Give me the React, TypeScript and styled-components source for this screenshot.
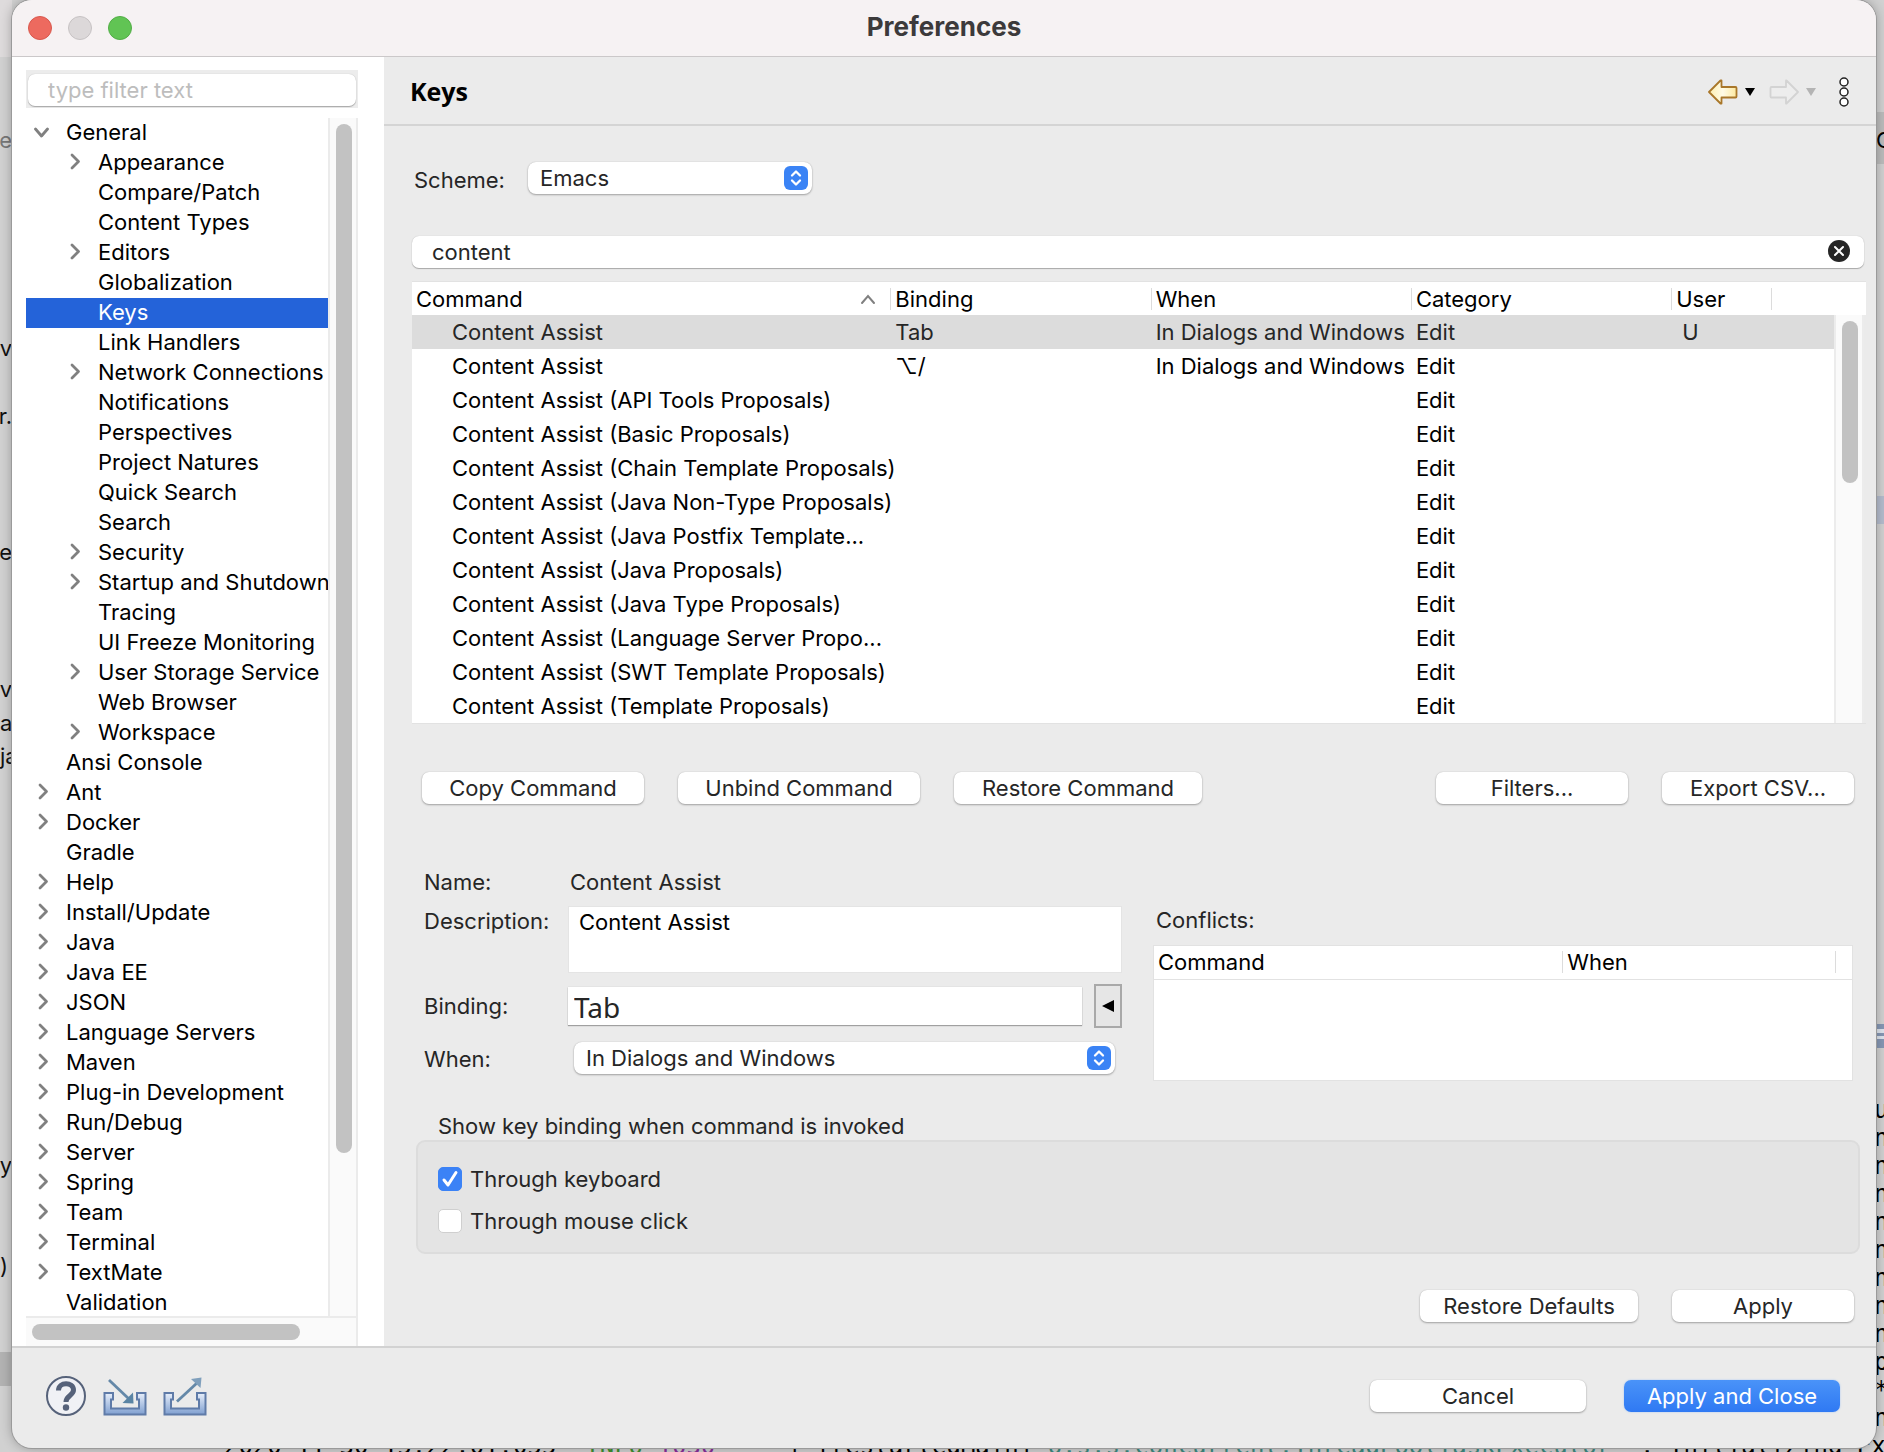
import React from "react";
import styled, { createGlobalStyle } from "styled-components";

const Global = createGlobalStyle`
  * { box-sizing: border-box; }
  html, body, #root { height: 100%; margin: 0; }
  body { overflow: hidden; background: #d3d3d3; }
  body, button, input, select, textarea, table {
    font-family: Inter, "Liberation Sans", "DejaVu Sans", sans-serif;
    font-size: 22px;
    line-height: 30px;
    color: #000;
  }
  button { cursor: default; }
`;

const Desktop = styled.div`
  position: relative;
  height: 100vh;
  padding: 0 8px 4px 12px;
  overflow: hidden;
  background: #d1d1d1;
`;

/* ---- editor window that lies behind the dialog ---- */

const Backdrop = styled.div`
  position: absolute;
  inset: 0;
`;

const Band = styled.div<{ $left: number; $width: number; $top: number; $height: number; $color: string }>`
  position: absolute;
  left: ${(p) => p.$left}px;
  width: ${(p) => p.$width}px;
  top: ${(p) => p.$top}px;
  height: ${(p) => p.$height}px;
  background: ${(p) => p.$color};
`;

const LeftFragment = styled.span<{ $top: number; $dim?: boolean; $start?: boolean }>`
  position: absolute;
  left: 0;
  top: ${(p) => p.$top}px;
  width: 12px;
  display: flex;
  justify-content: ${(p) => (p.$start ? "flex-start" : "flex-end")};
  white-space: nowrap;
  overflow: hidden;
  color: ${(p) => (p.$dim ? "#777" : "#111")};
`;

const RightFragment = styled.span<{ $top: number }>`
  position: absolute;
  right: 0;
  top: ${(p) => p.$top}px;
  width: 8px;
  overflow: hidden;
`;

const LogColumn = styled.div`
  position: absolute;
  right: 0;
  top: 1096px;
  width: 10px;
  overflow: hidden;
  font: 24px/28px "DejaVu Sans Mono", monospace;
`;

const LogLine = styled.pre`
  position: absolute;
  left: 224px;
  bottom: -8px;
  margin: 0;
  font: 24px/28px "DejaVu Sans Mono", monospace;
`;

const Ink = styled.span<{ $color: string }>`
  color: ${(p) => p.$color};
`;

/* ---- dialog ---- */

const Dialog = styled.main`
  position: relative;
  display: flex;
  flex-direction: column;
  height: 100%;
  background: #ebebeb;
  border-radius: 20px;
  overflow: hidden;
  box-shadow: 0 0 0 1px #9a9a9a, 0 0 12px rgba(0, 0, 0, 0.3);
`;

const TitleBar = styled.header`
  display: grid;
  grid-template-columns: 1fr auto 1fr;
  align-items: center;
  height: 57px;
  flex: none;
  padding: 0 16px;
  background: #f6f2f3;
  border-bottom: 1px solid #cbc8c9;
`;

const Lights = styled.div`
  display: flex;
  gap: 16px;
`;

const Light = styled.button<{ $color: string; $edge: string }>`
  width: 24px;
  height: 24px;
  padding: 0;
  border-radius: 50%;
  background: ${(p) => p.$color};
  border: 1px solid ${(p) => p.$edge};
`;

const WindowTitle = styled.h1`
  margin: 0;
  padding-bottom: 2px;
  font-size: 26px;
  line-height: 30px;
  font-weight: 700;
  color: #3c3a3b;
`;

const Body = styled.div`
  display: flex;
  flex: 1;
  min-height: 0;
`;

const Sidebar = styled.nav`
  display: flex;
  flex-direction: column;
  width: 372px;
  flex: none;
  padding: 13px 26px 0 14px;
  background: #fff;
`;

const FilterFrame = styled.div`
  padding: 4px 2px 2px;
  background: #ececec;
  margin-bottom: 10px;
`;

const TextField = styled.input`
  display: block;
  width: 100%;
  height: 32px;
  padding: 0 20px;
  border: 0;
  border-radius: 7px;
  background: #fff;
  color: #262626;
  box-shadow: 0 1px 1px #a8a8a8, 0 0 1px #b4b4b4;
  outline: none;
  &::placeholder { color: #bdbdbd; opacity: 1; }
`;

const TreePane = styled.div`
  display: grid;
  grid-template-columns: minmax(0, 1fr) 30px;
  grid-template-rows: minmax(0, 1fr) 30px;
  flex: 1;
  min-height: 0;
`;

const Tree = styled.ul`
  margin: 0;
  padding: 0;
  list-style: none;
  overflow: hidden;
`;

const TreeRow = styled.li<{ $depth: number; $selected?: boolean }>`
  display: flex;
  align-items: center;
  height: 30px;
  padding: 0 0 2px ${(p) => (p.$depth ? 40 : 8)}px;
  white-space: nowrap;
  background: ${(p) => (p.$selected ? "#2463d9" : "transparent")};
  color: ${(p) => (p.$selected ? "#fff" : "#000")};
`;

const Twisty = styled.span`
  display: flex;
  flex: none;
  width: 32px;
`;

const VTrack = styled.div`
  border-left: 2px solid #ebebeb;
  border-right: 2px solid #ebebeb;
  background: #fafafa;
  padding: 6px 5px 0 6px;
`;

const VThumb = styled.div<{ $size: string }>`
  width: 16px;
  height: ${(p) => p.$size};
  border-radius: 8px;
  background: #c2c2c2;
`;

const HTrack = styled.div`
  grid-column: 1 / -1;
  border-top: 2px solid #ebebeb;
  border-right: 2px solid #ebebeb;
  background: #fafafa;
  padding: 6px;
`;

const HThumb = styled.div`
  width: calc(100% - 50px);
  height: 16px;
  border-radius: 8px;
  background: #c2c2c2;
`;

const Page = styled.section`
  display: flex;
  flex-direction: column;
  flex: 1;
  min-width: 0;
`;

const PageHeader = styled.div`
  display: flex;
  align-items: center;
  justify-content: space-between;
  height: 69px;
  padding: 0 26px;
  border-bottom: 2px solid #d4d4d4;
`;

const PageTitle = styled.h2`
  margin: 0;
  font: 700 25px/30px "Open Sans", "Noto Sans", sans-serif;
`;

const ToolRow = styled.div`
  display: flex;
  align-items: center;
`;

const Tool = styled.button<{ $gap: number }>`
  display: flex;
  padding: 0;
  margin-left: ${(p) => p.$gap}px;
  border: 0;
  background: none;
`;

const Content = styled.div`
  display: flex;
  flex-direction: column;
  flex: 1;
  min-height: 0;
  padding: 36px 12px 24px 28px;
`;

const SchemeRow = styled.div`
  display: flex;
  align-items: center;
  height: 32px;
  gap: 24px;
  margin-bottom: 42px;
`;

const Label = styled.label`
  color: #262626;
`;

const SchemeLabel = styled(Label)`
  width: 92px;
  padding: 4px 0 0 2px;
`;

const PopupFrame = styled.div<{ $width?: number }>`
  position: relative;
  width: ${(p) => (p.$width ? p.$width + "px" : "auto")};
`;

const PopupSelect = styled.select`
  appearance: none;
  display: block;
  width: 100%;
  height: 32px;
  padding: 0 44px 0 12px;
  border: 0;
  border-radius: 8px;
  background: #fff;
  color: #262626;
  box-shadow: 0 1px 2px #a0a0a0, 0 0 1px #b4b4b4;
`;

const PopupArrows = styled.span`
  position: absolute;
  right: 4px;
  top: 4px;
  display: flex;
  pointer-events: none;
`;

const SearchFrame = styled.div`
  position: relative;
  margin-bottom: 13px;
`;

const ClearButton = styled.button`
  position: absolute;
  right: 14px;
  top: 4px;
  display: flex;
  padding: 0;
  border: 0;
  background: none;
`;

const TableFrame = styled.div`
  position: relative;
  background: #fff;
  margin: 0 -2px 48px 0;
  border-top: 1px solid #e2e2e2;
  border-bottom: 1px solid #e2e2e2;
`;

const DataTable = styled.table`
  width: 100%;
  border-collapse: collapse;
  table-layout: fixed;
`;

const HeadCell = styled.th<{ $first?: boolean }>`
  height: 33px;
  padding: 0 0 0 ${(p) => (p.$first ? 4 : 5)}px;
  font-weight: 400;
  text-align: left;
  background: ${(p) =>
    p.$first ? "none" : "linear-gradient(#dcdcdc, #dcdcdc) 0 50% / 1px 22px no-repeat"};
`;

const HeadLabel = styled.span`
  display: flex;
  align-items: center;
  justify-content: space-between;
  padding-right: 14px;
`;

const DataRow = styled.tr<{ $selected?: boolean }>`
  background: ${(p) => (p.$selected ? "#dcdcdc" : "#fff")};
  color: ${(p) => (p.$selected ? "#262626" : "#000")};
`;

const Cell = styled.td<{ $indent?: number }>`
  height: 34px;
  padding: 0 0 0 ${(p) => p.$indent ?? 5}px;
  white-space: nowrap;
`;

const TableScroll = styled.div`
  position: absolute;
  top: 33px;
  right: 2px;
  bottom: 0;
  width: 30px;
  border-left: 2px solid #ececec;
  border-right: 2px solid #ececec;
  background: #fafafa;
  box-shadow: 2px 0 0 #ebebeb;
  padding: 6px 6px;
`;

const ButtonRow = styled.div<{ $bottom?: boolean }>`
  display: flex;
  gap: 34px;
  padding: 0 10px;
  justify-content: ${(p) => (p.$bottom ? "flex-end" : "flex-start")};
  margin-top: ${(p) => (p.$bottom ? "auto" : "0")};
`;

const PushButton = styled.button<{ $width: number; $primary?: boolean }>`
  width: ${(p) => p.$width}px;
  height: 32px;
  padding: 0;
  border: 0;
  border-radius: 7px;
  white-space: nowrap;
  color: ${(p) => (p.$primary ? "#fff" : "#262626")};
  background: ${(p) => (p.$primary ? "linear-gradient(#4a93f8, #2f79f3)" : "#fff")};
  box-shadow: ${(p) =>
    p.$primary ? "0 0 2px #9fc3f5" : "0 1px 2px #a0a0a0, 0 0 1px #b4b4b4"};
`;

/* pushes the filter and export buttons to the far edge */
const Spacer = styled.div`
  flex: 1;
`;

const Details = styled.div`
  display: grid;
  grid-template-columns: 554fr 700fr;
  gap: 31px;
  padding: 63px 11px 0 156px;
`;

const DetailForm = styled.div`
  display: grid;
  grid-template-columns: 144px minmax(0, 1fr);
  align-content: start;
  margin-left: -144px;
`;

const FormLabel = styled(Label)`
  display: block;
`;

const NameValue = styled.output`
  padding-left: 2px;
  height: 39px;
  color: #262626;
`;

const Description = styled.textarea`
  display: block;
  height: 67px;
  padding: 0 10px;
  border: 1px solid #e4e4e4;
  background: #fff;
  resize: none;
  outline: none;
`;

const BindingRow = styled.div`
  display: flex;
  gap: 12px;
  margin-top: 11px;
`;

const BindingInput = styled.input`
  flex: 1;
  min-width: 0;
  height: 38px;
  margin-top: 3px;
  padding: 2px 6px 0;
  border: 0;
  background: #fff;
  box-shadow: 0 1px 1px #a0a0a0, 0 0 1px #c0c0c0;
  font: 28px/34px "Noto Sans", "Open Sans", sans-serif;
  color: #262626;
`;

const ArrowButton = styled.button`
  display: flex;
  align-items: center;
  justify-content: center;
  width: 28px;
  height: 44px;
  padding: 0;
  border: 2px solid #a9a9a9;
  background: #e6e6e6;
`;

const LowLabel = styled(FormLabel)<{ $lift: number }>`
  align-self: end;
  padding-bottom: ${(p) => p.$lift}px;
`;

const WhenFrame = styled(PopupFrame)`
  margin: 14px 7px 0 6px;
`;

const Conflicts = styled.div`
  padding-top: 38px;
`;

const ConflictsTitle = styled.div`
  padding-left: 3px;
  color: #262626;
  margin-bottom: 10px;
`;

const ConflictsFrame = styled.div`
  height: 136px;
  background: #fff;
  border: 1px solid #e2e2e2;
`;

const ConflictsHead = styled.thead`
  border-bottom: 1px solid #e2e2e2;
`;

const KeyGroup = styled.fieldset`
  margin: 32px 4px 0 4px;
  padding: 0;
  border: 0;
  min-width: 0;
`;

const KeyLegend = styled.legend`
  padding: 0 0 0 22px;
  line-height: 27px;
  color: #262626;
`;

const KeyBox = styled.div`
  display: grid;
  gap: 12px;
  align-content: start;
  height: 114px;
  padding: 22px 20px;
  border: 2px solid #dcdcdc;
  border-radius: 9px;
  background: #e4e4e4;
`;

const CheckLabel = styled(Label)`
  display: flex;
  align-items: center;
  gap: 8px;
`;

const Check = styled.input`
  appearance: none;
  width: 24px;
  height: 24px;
  margin: 0;
  border-radius: 5px;
  background: #fff;
  border: 1px solid #cfcfcf;
  &:checked {
    border-color: #3b82f6;
    background: #3b82f6
      url("data:image/svg+xml,%3Csvg xmlns='http://www.w3.org/2000/svg' viewBox='0 0 22 22'%3E%3Cpath d='M5 12l4 5L17 4.500' fill='none' stroke='white' stroke-width='3' stroke-linecap='round' stroke-linejoin='round'/%3E%3C/svg%3E");
  }
`;

const Footer = styled.footer`
  display: flex;
  align-items: center;
  flex: none;
  height: 102px;
  padding: 0 36px 4px 33px;
  border-top: 2px solid #d2d2d2;
`;

const FooterButtons = styled.div`
  display: flex;
  gap: 38px;
  margin-left: auto;
`;

/* ---- drawings ---- */

const Chevron = ({ open }: { open?: boolean }) => (
  <svg width="20" height="20" viewBox="0 0 20 20" fill="none" stroke="#808080" strokeWidth="2.8" strokeLinecap="round" strokeLinejoin="round">
    {open ? <path d="M1.500 7 7.500 14 13.500 7" /> : <path d="M6 3 12.500 9.500 6 16" />}
  </svg>
);

const UpDown = () => (
  <svg width="24" height="24" viewBox="0 0 24 24">
    <rect width="24" height="24" rx="6" fill="#3a83f5" />
    <path d="M8 9.500 12 5.500 16 9.500M8 14.500 12 18.500 16 14.500" fill="none" stroke="#fff" strokeWidth="2.300" strokeLinecap="round" strokeLinejoin="round" />
  </svg>
);

const ArrowIcon = ({ forward }: { forward?: boolean }) => (
  <svg width="30" height="30" viewBox="0 0 30 30">
    <defs>
      <linearGradient id="gold" x1="0" y1="0" x2="1" y2="0">
        <stop offset="0" stopColor="#fdeeb0" />
        <stop offset="0.500" stopColor="#fffbe6" />
        <stop offset="1" stopColor="#fde9a0" />
      </linearGradient>
    </defs>
    <path
      d={forward ? "M29 16 17.500 4.500H17V11H2.500Q1.500 11 1.500 12V20.500Q1.500 21.500 2.500 21.500H17V27.500H17.500Z" : "M1 16 12.500 4.500H13.500V11H27.500Q28.500 11 28.500 12V20.500Q28.500 21.500 27.500 21.500H13.500V27.500H12.500Z"}
      fill={forward ? "#ededed" : "url(#gold)"}
      stroke={forward ? "#d3d3d3" : "#a9772a"}
      strokeWidth="1.800"
      strokeLinejoin="round"
    />
  </svg>
);

const Caret = ({ color }: { color: string }) => (
  <svg width="10" height="10" viewBox="0 0 10 10">
    <path d="M0 2H10L5 10Z" fill={color} />
  </svg>
);

const Dots = () => (
  <svg width="12" height="32" viewBox="0 0 12 32" fill="#fff" stroke="#222" strokeWidth="1.500">
    <circle cx="6" cy="7" r="4" />
    <circle cx="6" cy="17" r="4" />
    <circle cx="6" cy="27" r="4" />
  </svg>
);

const HelpIcon = () => (
  <svg width="42" height="42" viewBox="0 0 42 42" fill="none" stroke="#56627a">
    <circle cx="21" cy="21" r="19" strokeWidth="2" fill="#f0f1f5" />
    <path d="M13.500 15.500C13.500 6.500 28.500 6.500 28.500 15 28.500 20.500 21 20.500 21 27" strokeWidth="5" />
    <circle cx="21" cy="32.500" r="3.200" fill="#56627a" stroke="none" />
  </svg>
);

const TrayIcon = ({ out }: { out?: boolean }) => (
  <svg width="44" height="42" viewBox="0 0 44 42">
    <defs>
      <linearGradient id="tray" x1="0" y1="0" x2="0" y2="1">
        <stop offset="0" stopColor="#e8effa" />
        <stop offset="1" stopColor="#7f9fd0" />
      </linearGradient>
    </defs>
    <path d="M1.500 18H10V24.500H8V33.500H36V24.500H34V18H42.500V39.500H1.500Z" fill="url(#tray)" stroke="#5f7ba8" strokeWidth="2" />
    {out ? (
      <>
        <path d="M14 26.500 34 8" stroke="#6488a8" strokeWidth="2.800" />
        <path d="M28 4 38.500 2.500 37.500 13Z" fill="#7f9fbc" />
      </>
    ) : (
      <>
        <path d="M6 5 26 24" stroke="#6488a8" strokeWidth="2.800" />
        <path d="M30 17.500 30.500 28.500 19.500 28Z" fill="#5a84a4" />
      </>
    )}
  </svg>
);

/* ---- data ---- */

type Node = { name: string; depth: number; kind: "open" | "closed" | "leaf" };

const branch = (depth: number, text: string): Node[] =>
  text.split("|").map((item) => ({
    name: item.replace("+", ""),
    depth,
    kind: item.startsWith("+") ? "closed" : "leaf",
  }));

const nodes: Node[] = [
  { name: "General", depth: 0, kind: "open" },
  ...branch(
    1,
    "+Appearance|Compare/Patch|Content Types|+Editors|Globalization|Keys|Link Handlers|+Network Connections|Notifications|Perspectives|Project Natures|Quick Search|Search|+Security|+Startup and Shutdown|Tracing|UI Freeze Monitoring|+User Storage Service|Web Browser|+Workspace"
  ),
  ...branch(
    0,
    "Ansi Console|+Ant|+Docker|Gradle|+Help|+Install/Update|+Java|+Java EE|+JSON|+Language Servers|+Maven|+Plug-in Development|+Run/Debug|+Server|+Spring|+Team|+Terminal|+TextMate|Validation"
  ),
];

const commands = [
  ["Content Assist", "Tab", "In Dialogs and Windows", "U"],
  ["Content Assist", "⌥/", "In Dialogs and Windows", ""],
  ["Content Assist (API Tools Proposals)", "", "", ""],
  ["Content Assist (Basic Proposals)", "", "", ""],
  ["Content Assist (Chain Template Proposals)", "", "", ""],
  ["Content Assist (Java Non-Type Proposals)", "", "", ""],
  ["Content Assist (Java Postfix Template...", "", "", ""],
  ["Content Assist (Java Proposals)", "", "", ""],
  ["Content Assist (Java Type Proposals)", "", "", ""],
  ["Content Assist (Language Server Propo...", "", "", ""],
  ["Content Assist (SWT Template Proposals)", "", "", ""],
  ["Content Assist (Template Proposals)", "", "", ""],
];

const leftFragments: [number, string][] = [
  [333, "av"], [401, "r."], [537, "e"], [674, "v"], [1150, "ay"],
];

const leadingFragments: [number, string][] = [
  [708, "a"], [741, "ja"], [1251, ")"],
];

export default function App() {
  return (
    <>
      <Global />
      <Desktop>
        <Backdrop aria-hidden="true">
          <Band $left={0} $width={12} $top={0} $height={57} $color="#dedbdc" />
          <Band $left={0} $width={12} $top={1352} $height={34} $color="#b3b3b3" />
          <LeftFragment $top={125} $dim>e</LeftFragment>
          {leftFragments.map(([top, text]) => (
            <LeftFragment key={top} $top={top}>{text}</LeftFragment>
          ))}
          {leadingFragments.map(([top, text]) => (
            <LeftFragment key={top} $top={top} $start>{text}</LeftFragment>
          ))}
          <Band $left={1876} $width={8} $top={112} $height={52} $color="#bcbcbc" />
          <Band $left={1876} $width={8} $top={496} $height={28} $color="#b4bccd" />
          <Band $left={1876} $width={8} $top={1024} $height={24} $color="#8798b5" />
          <Band $left={1876} $width={8} $top={1029} $height={4} $color="#dfe5ee" />
          <Band $left={1876} $width={8} $top={1036} $height={3} $color="#dfe5ee" />
          <RightFragment $top={125}>C</RightFragment>
          <LogColumn>
            {"unnnnnnnnp*n".split("").map((c, i) => (
              <div key={i}>{c}</div>
            ))}
          </LogColumn>
          <LogLine>
            {"2020-11-30 15:22:01.055  "}
            <Ink $color="#3f8f2f">INFO</Ink>
            <Ink $color="#8a2f9a"> 1030</Ink>
            {"     | [restartedMain] "}
            <Ink $color="#3f8a80">o.s.s.concurrent.ThreadPoolTaskExecutor</Ink>
            {"  : Initializing Ex"}
          </LogLine>
        </Backdrop>

        <Dialog>
          <TitleBar>
            <Lights>
              <Light aria-label="Close" $color="#ed6a5f" $edge="#d8584d" />
              <Light aria-label="Minimize" $color="#dcd8d9" $edge="#c6c2c3" />
              <Light aria-label="Zoom" $color="#61c454" $edge="#52ad46" />
            </Lights>
            <WindowTitle>Preferences</WindowTitle>
          </TitleBar>

          <Body>
            <Sidebar>
              <FilterFrame>
                <TextField aria-label="Filter" placeholder="type filter text" />
              </FilterFrame>
              <TreePane>
                <Tree>
                  {nodes.map((n) => (
                    <TreeRow key={n.name} $depth={n.depth} $selected={n.name === "Keys"}>
                      <Twisty>{n.kind !== "leaf" && <Chevron open={n.kind === "open"} />}</Twisty>
                      {n.name}
                    </TreeRow>
                  ))}
                </Tree>
                <VTrack><VThumb $size="calc(100% - 163px)" /></VTrack>
                <HTrack><HThumb /></HTrack>
              </TreePane>
            </Sidebar>

            <Page>
              <PageHeader>
                <PageTitle>Keys</PageTitle>
                <ToolRow>
                  <Tool $gap={0} aria-label="Back"><ArrowIcon /></Tool>
                  <Tool $gap={7} aria-label="Back history"><Caret color="#000" /></Tool>
                  <Tool $gap={14} aria-label="Forward"><ArrowIcon forward /></Tool>
                  <Tool $gap={7} aria-label="Forward history"><Caret color="#b4b4b4" /></Tool>
                  <Tool $gap={22} aria-label="View menu"><Dots /></Tool>
                </ToolRow>
              </PageHeader>

              <Content>
                <SchemeRow>
                  <SchemeLabel htmlFor="scheme">Scheme:</SchemeLabel>
                  <PopupFrame $width={284}>
                    <PopupSelect id="scheme"><option>Emacs</option></PopupSelect>
                    <PopupArrows><UpDown /></PopupArrows>
                  </PopupFrame>
                </SchemeRow>

                <SearchFrame>
                  <TextField aria-label="Search commands" defaultValue="content" />
                  <ClearButton aria-label="Clear">
                    <svg width="22" height="22" viewBox="0 0 22 22">
                      <circle cx="11" cy="11" r="11" fill="#262626" />
                      <path d="M7 7 15 15M15 7 7 15" stroke="#fff" strokeWidth="2" strokeLinecap="round" />
                    </svg>
                  </ClearButton>
                </SearchFrame>

                <TableFrame>
                  <DataTable>
                    <colgroup>
                      <col style={{ width: "32.900%" }} />
                      <col style={{ width: "17.900%" }} />
                      <col style={{ width: "17.900%" }} />
                      <col style={{ width: "17.900%" }} />
                      <col style={{ width: "6.900%" }} />
                      <col />
                    </colgroup>
                    <thead>
                      <tr>
                        <HeadCell $first>
                          <HeadLabel>
                            Command
                            <svg width="16" height="12" viewBox="0 0 16 12" fill="none" stroke="#808080" strokeWidth="2" strokeLinecap="round">
                              <path d="M2 10 8 3 14 10" />
                            </svg>
                          </HeadLabel>
                        </HeadCell>
                        <HeadCell>Binding</HeadCell>
                        <HeadCell>When</HeadCell>
                        <HeadCell>Category</HeadCell>
                        <HeadCell>User</HeadCell>
                        <HeadCell />
                      </tr>
                    </thead>
                    <tbody>
                      {commands.map(([name, binding, when, user], i) => (
                        <DataRow key={i} $selected={i === 0}>
                          <Cell $indent={40}>{name}</Cell>
                          <Cell>{binding}</Cell>
                          <Cell>{when}</Cell>
                          <Cell>Edit</Cell>
                          <Cell $indent={11}>{user}</Cell>
                          <Cell />
                        </DataRow>
                      ))}
                    </tbody>
                  </DataTable>
                  <TableScroll><VThumb $size="162px" /></TableScroll>
                </TableFrame>

                <ButtonRow>
                  <PushButton $width={222}>Copy Command</PushButton>
                  <PushButton $width={242}>Unbind Command</PushButton>
                  <PushButton $width={248}>Restore Command</PushButton>
                  <Spacer />
                  <PushButton $width={192}>Filters...</PushButton>
                  <PushButton $width={192}>Export CSV...</PushButton>
                </ButtonRow>

                <Details>
                  <DetailForm>
                    <FormLabel as="span">Name:</FormLabel>
                    <NameValue>Content Assist</NameValue>
                    <FormLabel htmlFor="description">Description:</FormLabel>
                    <Description id="description" defaultValue="Content Assist" />
                    <LowLabel $lift={7} htmlFor="binding">Binding:</LowLabel>
                    <BindingRow>
                      <BindingInput id="binding" defaultValue="Tab" />
                      <ArrowButton aria-label="Insert special key">
                        <svg width="12" height="12" viewBox="0 0 12 12"><path d="M0 6 12 0V12Z" /></svg>
                      </ArrowButton>
                    </BindingRow>
                    <LowLabel $lift={0} htmlFor="when">When:</LowLabel>
                    <WhenFrame>
                      <PopupSelect id="when"><option>In Dialogs and Windows</option></PopupSelect>
                      <PopupArrows><UpDown /></PopupArrows>
                    </WhenFrame>
                  </DetailForm>

                  <Conflicts>
                    <ConflictsTitle id="conflicts">Conflicts:</ConflictsTitle>
                    <ConflictsFrame>
                      <DataTable aria-labelledby="conflicts">
                        <colgroup>
                          <col style={{ width: "58.500%" }} />
                          <col style={{ width: "39%" }} />
                          <col />
                        </colgroup>
                        <ConflictsHead>
                          <tr>
                            <HeadCell $first>Command</HeadCell>
                            <HeadCell>When</HeadCell>
                            <HeadCell />
                          </tr>
                        </ConflictsHead>
                      </DataTable>
                    </ConflictsFrame>
                  </Conflicts>
                </Details>

                <KeyGroup>
                  <KeyLegend>Show key binding when command is invoked</KeyLegend>
                  <KeyBox>
                    <CheckLabel><Check type="checkbox" defaultChecked />Through keyboard</CheckLabel>
                    <CheckLabel><Check type="checkbox" />Through mouse click</CheckLabel>
                  </KeyBox>
                </KeyGroup>

                <ButtonRow $bottom>
                  <PushButton $width={218}>Restore Defaults</PushButton>
                  <PushButton $width={182}>Apply</PushButton>
                </ButtonRow>
              </Content>
            </Page>
          </Body>

          <Footer>
            <Tool $gap={0} aria-label="Help"><HelpIcon /></Tool>
            <Tool $gap={16} aria-label="Import"><TrayIcon /></Tool>
            <Tool $gap={16} aria-label="Export"><TrayIcon out /></Tool>
            <FooterButtons>
              <PushButton $width={216}>Cancel</PushButton>
              <PushButton $width={216} $primary>Apply and Close</PushButton>
            </FooterButtons>
          </Footer>
        </Dialog>
      </Desktop>
    </>
  );
}
